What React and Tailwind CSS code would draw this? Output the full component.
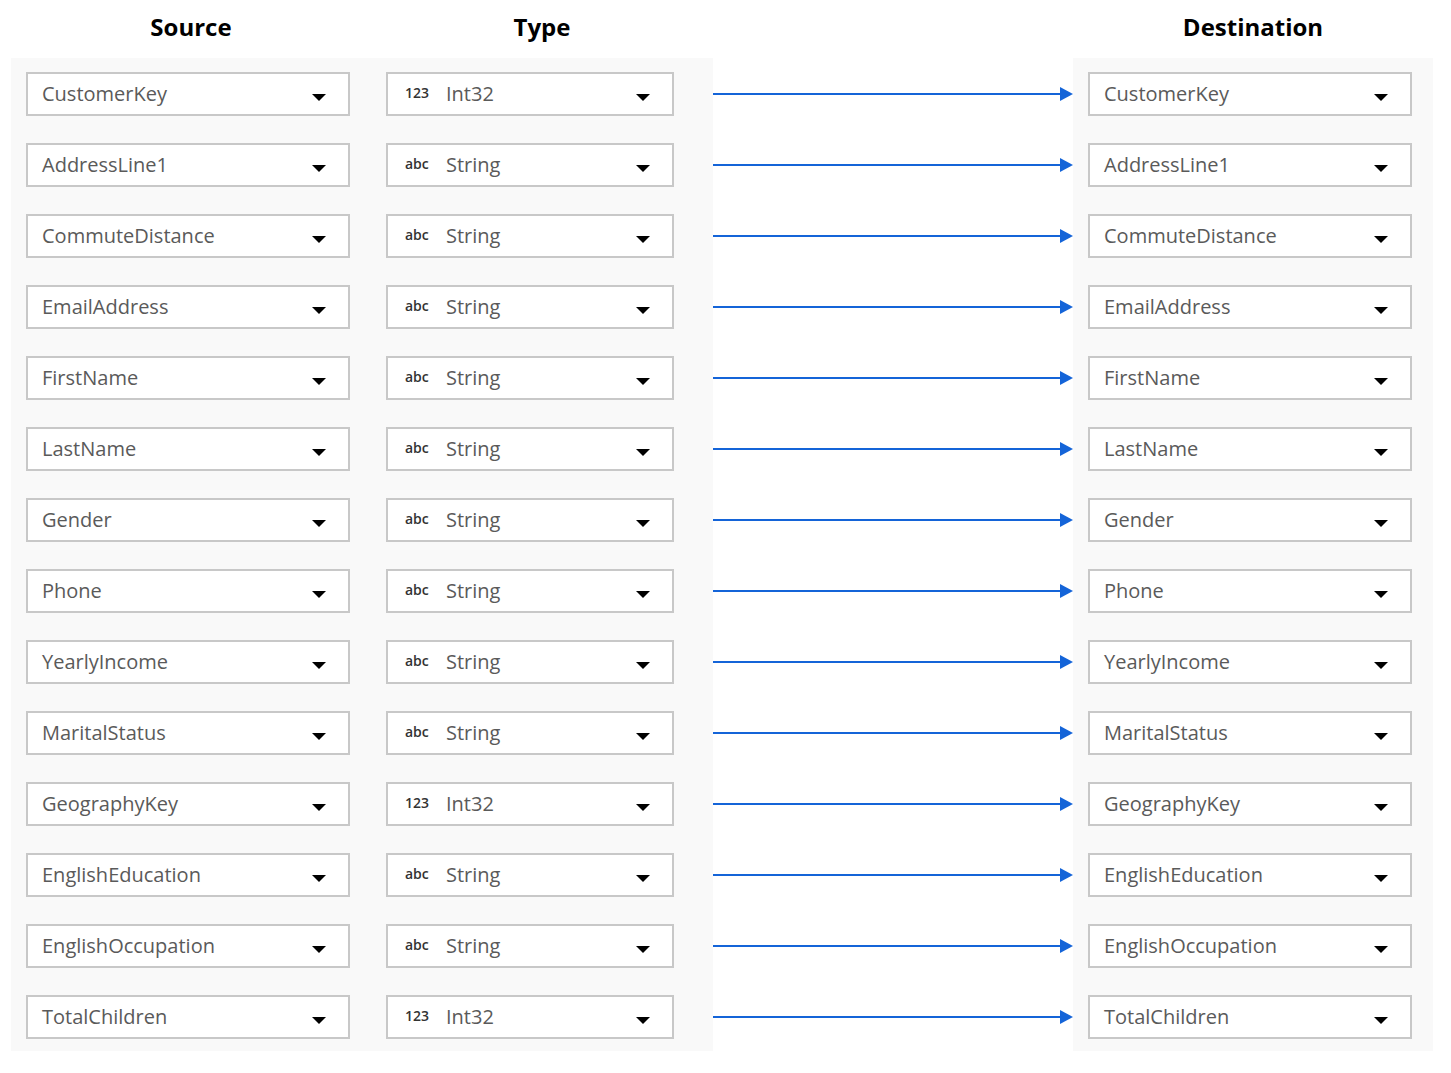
const rows = [
  ['CustomerKey', 'Int32'],
  ['AddressLine1', 'String'],
  ['CommuteDistance', 'String'],
  ['EmailAddress', 'String'],
  ['FirstName', 'String'],
  ['LastName', 'String'],
  ['Gender', 'String'],
  ['Phone', 'String'],
  ['YearlyIncome', 'String'],
  ['MaritalStatus', 'String'],
  ['GeographyKey', 'Int32'],
  ['EnglishEducation', 'String'],
  ['EnglishOccupation', 'String'],
  ['TotalChildren', 'Int32'],
];

function Caret() {
  return (
    <svg width="14" height="7" viewBox="0 0 14 7" className="shrink-0 mt-[6px]">
      <path d="M0 0 L14 0 L7 7 Z" fill="#000" />
    </svg>
  );
}

function Select({ children, width }) {
  return (
    <div className={`flex items-center justify-between h-[44px] ${width} bg-white border-2 border-[#c8c8c8] pl-[14px] pr-[22px]`}>
      <div className="flex items-center text-[20px] text-[#5a5a5a] leading-none">{children}</div>
      <Caret />
    </div>
  );
}

function Arrow() {
  return (
    <div className="h-[44px] flex items-center">
      <div className="flex-1 h-[2px] bg-[#1464d8]" />
      <svg width="13" height="14" viewBox="0 0 13 14" className="shrink-0">
        <path d="M0 0 L13 7 L0 14 Z" fill="#1464d8" />
      </svg>
    </div>
  );
}

export default function App() {
  return (
    <div className="w-[1451px] h-[1073px] bg-white pl-[11px]" style={{ fontFamily: '"Open Sans", "Noto Sans", sans-serif' }}>
      <div className="flex h-[58px] items-center pb-[4px] text-[24px] font-bold text-black">
        <div className="w-[702px] flex pl-[15px]">
          <div className="w-[324px] text-center pl-[6px]">Source</div>
          <div className="w-[36px]" />
          <div className="w-[288px] text-center pl-[24px]">Type</div>
        </div>
        <div className="w-[360px]" />
        <div className="w-[360px] pl-[15px]">
          <div className="w-[324px] text-center pl-[6px]">Destination</div>
        </div>
      </div>

      <div className="flex">
        <div className="w-[702px] bg-[#f9f9f9] pl-[15px] pt-[14px] pb-[12px] flex gap-[36px]">
          <div className="flex flex-col gap-[27px]">
            {rows.map(([name]) => (
              <Select key={name} width="w-[324px]">{name}</Select>
            ))}
          </div>
          <div className="flex flex-col gap-[27px]">
            {rows.map(([name, type]) => (
              <Select key={name} width="w-[288px]">
                <span className="w-[34px] pl-[3px] text-[14px] font-semibold text-[#333333] mr-[10px] -mt-[3px]">
                  {type === 'Int32' ? '123' : 'abc'}
                </span>
                {type}
              </Select>
            ))}
          </div>
        </div>

        <div className="w-[360px] pt-[14px] flex flex-col gap-[27px]">
          {rows.map(([name]) => (
            <Arrow key={name} />
          ))}
        </div>

        <div className="w-[360px] bg-[#f9f9f9] pl-[15px] pt-[14px] pb-[12px] flex flex-col gap-[27px]">
          {rows.map(([name]) => (
            <Select key={name} width="w-[324px]">{name}</Select>
          ))}
        </div>
      </div>
    </div>
  );
}
